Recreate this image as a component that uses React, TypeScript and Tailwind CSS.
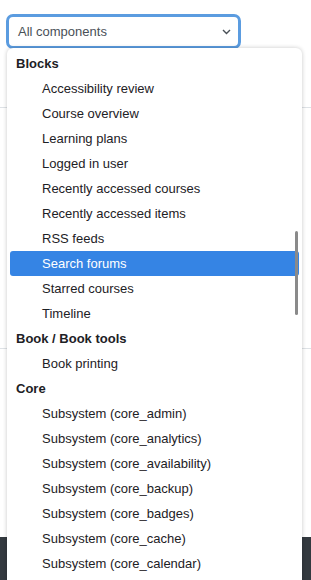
import React from "react";

type Row = { label: string; header?: boolean; active?: boolean };

const rows: Row[] = [
  { label: "Blocks", header: true },
  { label: "Accessibility review" },
  { label: "Course overview" },
  { label: "Learning plans" },
  { label: "Logged in user" },
  { label: "Recently accessed courses" },
  { label: "Recently accessed items" },
  { label: "RSS feeds" },
  { label: "Search forums", active: true },
  { label: "Starred courses" },
  { label: "Timeline" },
  { label: "Book / Book tools", header: true },
  { label: "Book printing" },
  { label: "Core", header: true },
  { label: "Subsystem (core_admin)" },
  { label: "Subsystem (core_analytics)" },
  { label: "Subsystem (core_availability)" },
  { label: "Subsystem (core_backup)" },
  { label: "Subsystem (core_badges)" },
  { label: "Subsystem (core_cache)" },
  { label: "Subsystem (core_calendar)" },
];

export default function App() {
  return (
    <div
      className="relative h-[580px] w-[311px] overflow-hidden bg-white"
      style={{ fontFamily: '"Liberation Sans", Arial, sans-serif' }}
    >
      {/* page content */}
      <div className="flex flex-col">
        <div className="h-[107px] pl-[6px] pt-[14px]">
          <div className="flex h-[35px] w-[235px] items-center justify-between rounded-[7px] border-[3px] border-[#5b9ce0] pl-[9px] pr-[7px]">
            <span className="text-[13px] text-[#495057]">All components</span>
            <svg width="9" height="6" viewBox="0 0 9 6" className="mt-[1px]">
              <polyline points="1,1 4.5,4.5 8,1" fill="none" stroke="#495057" strokeWidth="1.4" />
            </svg>
          </div>
        </div>
        <div className="h-[241px] border-t border-[#dee2e6]" />
        <div className="h-[189px] border-t border-[#dee2e6]" />
        <div className="h-[43px] bg-[#33393f]" />
      </div>

      {/* dropdown list */}
      <div className="absolute left-[7px] top-[48px] h-[560px] w-[295px] rounded-[6px] bg-white pt-[3px] shadow-[0_0_4px_rgba(0,0,0,0.22)]">
        <div className="relative px-[3px]">
          {rows.map((r, i) => (
            <div
              key={i}
              className={
                "flex h-[25px] items-center text-[13px] " +
                (r.header
                  ? "pl-[6px] font-bold text-[#1d2125]"
                  : r.active
                  ? "rounded-[3px] bg-[#3584e4] pl-[32px] text-white"
                  : "pl-[32px] text-[#1d2125]")
              }
            >
              {r.label}
            </div>
          ))}
          <div className="absolute left-[288px] top-[180px] h-[84px] w-[3px] rounded-full bg-[#8a8a8a]" />
        </div>
      </div>
    </div>
  );
}
